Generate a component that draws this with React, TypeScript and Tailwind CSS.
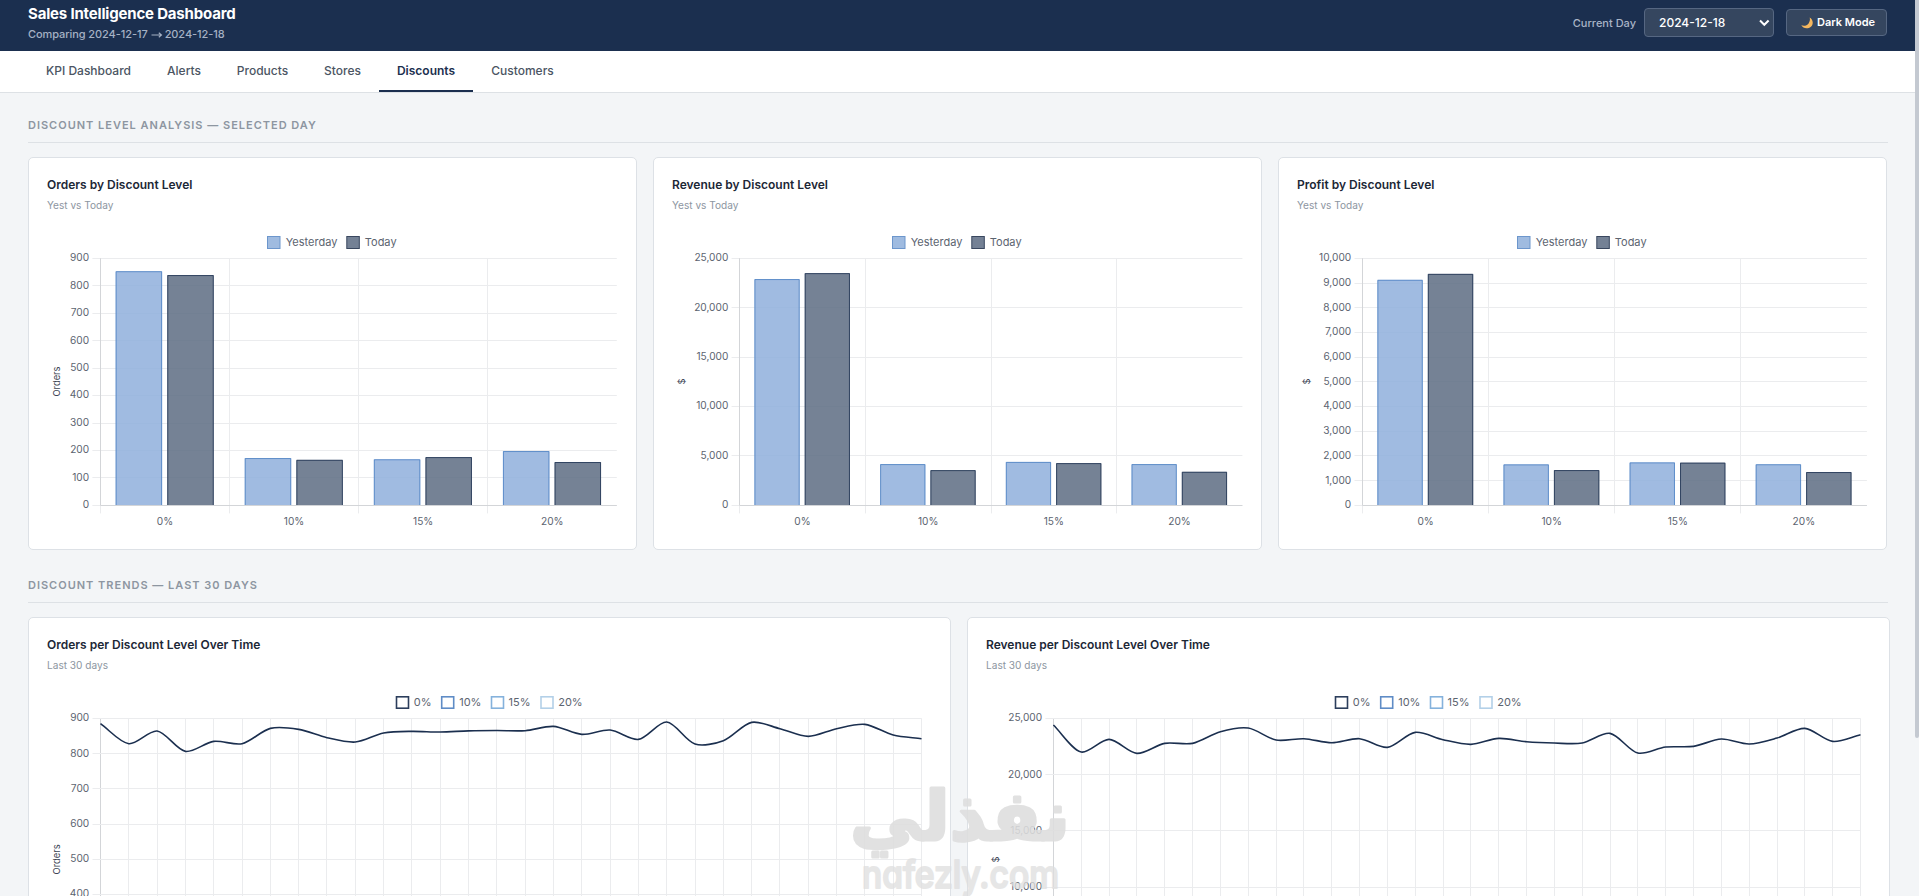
import React from "react";

const GRID = "#ebecee";
const AXIS = "#d3d5d8";
const TICK = "#5c6470";
const NAVY = "#1b2f4f";
const BLUE = "#4a7fc1";

const snap = (v: number) => Math.floor(v) + 0.5;

type Tick = { y: number; label: string };

function YTicks({ ticks, left, right }: { ticks: Tick[]; left: number; right: number }) {
  return (
    <g>
      {ticks.map((t) => (
        <g key={t.label}>
          <line x1={left - 8} x2={right} y1={snap(t.y)} y2={snap(t.y)} stroke={GRID} />
          <text x={left - 11.3} y={t.y + 2.9} textAnchor="end" fontSize={10.15} fill={TICK}>
            {t.label}
          </text>
        </g>
      ))}
    </g>
  );
}

function AxisTitle({ text, y }: { text: string; y: number }) {
  return (
    <text
      transform={`translate(13 ${y}) rotate(-90)`}
      textAnchor="middle"
      fontSize={9.3}
      fill="#3c4553"
    >
      {text}
    </text>
  );
}

type BarProps = {
  left: number;
  step: number;
  max: number;
  unit: number;
  title: string;
  pairs: [number, number][];
};

function BarChart({ left, step, max, unit, title, pairs }: BarProps) {
  const top = 38.3;
  const bottom = 285.4;
  const right = left + step * 4;
  const ticks: Tick[] = [];
  for (let v = max; v >= 0; v -= unit) {
    ticks.push({ y: bottom - ((bottom - top) * v) / max, label: v.toLocaleString("en-US") });
  }
  const barW = step * 0.36;
  const labels = ["0%", "10%", "15%", "20%"];
  const bar = (x: number, v: number, fill: string, stroke: string, key: string) => {
    const y = bottom - ((bottom - top) * v) / max;
    return (
      <g key={key}>
        <rect x={x} y={y} width={barW} height={bottom - y} fill={fill} fillOpacity={0.86} />
        <path
          d={`M${x + 0.5} ${bottom}V${y + 0.5}H${x + barW - 0.5}V${bottom}`}
          fill="none"
          stroke={stroke}
          strokeOpacity={0.75}
        />
      </g>
    );
  };
  return (
    <svg width="571" height="320" viewBox="0 0 571 320" className="block shrink-0">
      <rect x="220.5" y="16.5" width="12.5" height="12" fill="#9fbbe0" stroke="#6c96cc" />
      <text x="238.7" y="26.4" fontSize="11" fill={TICK}>Yesterday</text>
      <rect x="299.8" y="16.5" width="12.5" height="12" fill="#748195" stroke="#39475f" />
      <text x="317.8" y="26.4" fontSize="11" fill={TICK}>Today</text>
      {[1, 2, 3].map((i) => (
        <line key={i} x1={snap(left + step * i)} x2={snap(left + step * i)} y1={top} y2={bottom + 8} stroke={GRID} />
      ))}
      <YTicks ticks={ticks} left={left} right={right} />
      <line x1={snap(left)} x2={snap(left)} y1={bottom} y2={bottom + 8} stroke={GRID} />
      {pairs.map(([a, b], i) => {
        const x = left + step * i + step * 0.118;
        return (
          <g key={i}>
            {bar(x, a, "#90b0dc", BLUE, "a")}
            {bar(x + step * 0.4, b, "#5e6d84", NAVY, "b")}
            <text x={left + step * (i + 0.5)} y={305.2} textAnchor="middle" fontSize={10.15} fill={TICK}>
              {labels[i]}
            </text>
          </g>
        );
      })}
      <line x1={snap(left)} x2={snap(left)} y1={top} y2={bottom} stroke={AXIS} />
      <line x1={left} x2={right} y1={snap(bottom)} y2={snap(bottom)} stroke={AXIS} />
      <AxisTitle text={title} y={161.5} />
    </svg>
  );
}

// Cubic spline with the tension rule used by common canvas chart libraries.
function splinePath(pts: [number, number][], tension: number) {
  const cps = pts.map((p, i) => {
    const a = pts[Math.max(0, i - 1)];
    const c = pts[Math.min(pts.length - 1, i + 1)];
    const d01 = Math.hypot(p[0] - a[0], p[1] - a[1]);
    const d12 = Math.hypot(c[0] - p[0], c[1] - p[1]);
    const sum = d01 + d12;
    const fa = (tension * d01) / sum;
    const fb = (tension * d12) / sum;
    return {
      prev: [p[0] - fa * (c[0] - a[0]), p[1] - fa * (c[1] - a[1])],
      next: [p[0] + fb * (c[0] - a[0]), p[1] + fb * (c[1] - a[1])],
    };
  });
  let d = `M${pts[0][0]} ${pts[0][1]}`;
  for (let i = 1; i < pts.length; i++) {
    d += `C${cps[i - 1].next.join(" ")} ${cps[i].prev.join(" ")} ${pts[i].join(" ")}`;
  }
  return d;
}

const LEVELS = [
  { label: "0%", color: "#2c3e5c", x: 0, tx: 18.4 },
  { label: "10%", color: "#5f8cc6", x: 45.2, tx: 63.8 },
  { label: "15%", color: "#85b2dc", x: 95, tx: 113.2 },
  { label: "20%", color: "#b3d0e8", x: 144.5, tx: 162.8 },
];

type LineProps = { left: number; ticks: Tick[]; title: string; values: number[] };

function LineChart({ left, ticks, title, values }: LineProps) {
  const right = 874.5;
  const top = 38.3;
  const step = (right - left) / (values.length - 1);
  const pts = values.map((v, i): [number, number] => [left + i * step, top + v - 0.6]);
  return (
    <svg width="885" height="360" viewBox="0 0 885 360" className="block shrink-0">
      {LEVELS.map((l) => (
        <g key={l.label}>
          <rect x={349.5 + l.x} y="16.8" width="12" height="11.4" fill="#fff" stroke={l.color} strokeWidth="1.6" />
          <text x={348.4 + l.tx} y="26.4" fontSize="11" fill={TICK}>{l.label}</text>
        </g>
      ))}
      {values.map((_, i) => (
        <line
          key={i}
          x1={snap(left + i * step)}
          x2={snap(left + i * step)}
          y1={top}
          y2="320"
          stroke={i === 0 ? AXIS : GRID}
        />
      ))}
      <YTicks ticks={ticks} left={left} right={right} />
      <path d={splinePath(pts, 0.3)} fill="none" stroke={NAVY} strokeWidth="1.6" />
      <AxisTitle text={title} y={179.4} />
    </svg>
  );
}

function Card({ title, sub, className, children }: { title: string; sub: string; className: string; children: React.ReactNode }) {
  return (
    <div className={`flex shrink-0 flex-col rounded-[5px] border border-[#dde1e6] bg-white px-[18px] ${className}`}>
      <h3 className="mt-[18px] h-[18px] text-[12px] leading-[18px] font-semibold text-[#1c2736]">{title}</h3>
      <p className="mt-1 mb-[7px] h-[15px] text-[10.1px] leading-[15px] text-[#8d96a1]">{sub}</p>
      {children}
    </div>
  );
}

function SectionTitle({ children }: { children: React.ReactNode }) {
  return (
    <h2 className="flex h-[27px] w-[1860px] items-start border-b border-[#dde1e5] text-[11px] leading-[18px] font-semibold tracking-[0.99px] text-[#8d96a1]">
      {children}
    </h2>
  );
}

const TABS = [
  { label: "KPI Dashboard", w: "w-[121px]" },
  { label: "Alerts", w: "w-[70px]" },
  { label: "Products", w: "w-[87px]" },
  { label: "Stores", w: "w-[73px]" },
  { label: "Discounts", w: "w-[94px]" },
  { label: "Customers", w: "w-[99px]" },
];

const orderTicks: Tick[] = [900, 800, 700, 600, 500, 400].map((v, i) => ({ y: 38.4 + i * 35.2, label: String(v) }));
const revenueTicks: Tick[] = ["25,000", "20,000", "15,000", "10,000"].map((label, i) => ({ y: 38.3 + i * 56.3, label }));

const orders = [
  18, 78, 40, 101, 71, 78, 32, 35, 60, 73, 46, 41, 43, 39.5, 38.5, 39, 26, 50, 37, 65, 13, 79, 69, 14, 33, 56, 33, 20, 52,
  63,
].map((v) => v / 3);
const revenue = [
  22, 103, 65, 107, 77, 77, 42, 31, 67, 63, 75, 63, 89, 44, 66, 80, 62, 72, 76, 76, 47, 106, 88, 86, 64, 79, 61, 32, 71,
  51,
].map((v) => v / 3);

export default function App() {
  return (
    <div className="relative flex h-[896px] w-full overflow-hidden bg-[#f3f5f7] font-[Inter,'Liberation_Sans',sans-serif]">
      <div className="flex w-[1915px] shrink-0 flex-col">
        <header className="flex h-[51px] shrink-0 items-start justify-between bg-[#1b2f4f] pr-7 pl-7">
          <div className="flex flex-col">
            <h1 className="mt-1 h-[20px] text-[15px] leading-[20px] font-bold tracking-[-0.18px] text-white">
              Sales Intelligence Dashboard
            </h1>
            <p className="mt-[3px] flex h-[14px] items-center text-[11px] leading-[14px] font-medium tracking-[-0.08px] text-[#a5b1c4]">
              <span>Comparing 2024-12-17</span>
              <svg width="17" height="8" viewBox="0 0 17 8" fill="none" stroke="#a5b1c4" strokeWidth="1.1" className="mt-px">
                <path d="M3.500 4H13.500M10.800 1.800 13.500 4 10.800 6.200" />
              </svg>
              <span>2024-12-18</span>
            </p>
          </div>
          <div className="flex items-center pt-2">
            <span className="mr-2 text-[11px] leading-[28px] font-medium text-[#a9b4c6]">Current Day</span>
            <div className="flex h-[29px] w-[130px] items-center justify-between rounded-[4px] border border-[#566782] bg-[#35465f] pr-[3px] pl-[14px] text-[12px] font-medium text-white">
              2024-12-18
              <svg width="11" height="8" viewBox="0 0 11 8" fill="none" stroke="#fff" strokeWidth="2">
                <path d="M1 1.5 5.3 5.8 9.6 1.5" />
              </svg>
            </div>
            <div className="ml-3 flex h-[27px] w-[101px] items-center rounded-[4px] border border-[#566782] bg-[#35465f] pl-[14px] text-[11px] font-semibold text-white">
              <svg width="12" height="12" viewBox="0 0 12 12" className="mt-px mr-[4px] shrink-0">
                <path d="M8.700.500C12.300 2.800 12.700 7.200 9.900 9.700 7 12.200 2.200 11.900.300 8.300 3 9.300 6 8.600 7.600 6.400 8.900 4.600 9.200 2.500 8.700.500Z" fill="#f5b75e" />
              </svg>
              Dark Mode
            </div>
          </div>
        </header>
        <nav className="flex h-[42px] shrink-0 border-b border-[#dde1e5] bg-white pl-7">
          {TABS.map((t) => (
            <div
              key={t.label}
              className={`flex h-[41px] justify-center border-b-2 text-[12px] leading-[40px] ${t.w} ${
                t.label === "Discounts"
                  ? "border-[#1b2f4f] font-semibold text-[#1b2f4f]"
                  : "border-transparent font-medium text-[#4b5563]"
              }`}
            >
              {t.label}
            </div>
          ))}
        </nav>
        <main className="flex flex-col pt-[23px] pl-7">
          <SectionTitle>DISCOUNT LEVEL ANALYSIS — SELECTED DAY</SectionTitle>
          <div className="mt-[14px] flex gap-4">
            <Card title="Orders by Discount Level" sub="Yest vs Today" className="h-[393px] w-[609px]">
              <BarChart left={53.4} step={129.1} max={900} unit={100} title="Orders"
                pairs={[[853, 839], [172.5, 166], [168, 176], [198, 158]]} />
            </Card>
            <Card title="Revenue by Discount Level" sub="Yest vs Today" className="h-[393px] w-[609px]">
              <BarChart left={67.6} step={125.7} max={25000} unit={5000} title="$"
                pairs={[[22900, 23500], [4180, 3570], [4400, 4280], [4180, 3400]]} />
            </Card>
            <Card title="Profit by Discount Level" sub="Yest vs Today" className="h-[393px] w-[609px]">
              <BarChart left={65.5} step={126.1} max={10000} unit={1000} title="$"
                pairs={[[9130, 9370], [1660, 1430], [1740, 1730], [1665, 1350]]} />
            </Card>
          </div>
          <div className="mt-[26px] flex flex-col">
            <SectionTitle>DISCOUNT TRENDS — LAST 30 DAYS</SectionTitle>
          </div>
          <div className="mt-[14px] flex gap-4">
            <Card title="Orders per Discount Level Over Time" sub="Last 30 days" className="h-[460px] w-[923px]">
              <LineChart left={53.5} ticks={orderTicks} title="Orders" values={orders} />
            </Card>
            <Card title="Revenue per Discount Level Over Time" sub="Last 30 days" className="h-[460px] w-[923px]">
              <LineChart left={67.4} ticks={revenueTicks} title="$" values={revenue} />
            </Card>
          </div>
        </main>
      </div>
      <div className="w-1 shrink-0">
        <div className="h-[738px] rounded-b-[2px] bg-[#c4c9d1]" />
      </div>
      <svg width="240" height="116" viewBox="840 780 240 116" className="pointer-events-none absolute top-[780px] left-[840px]">
        <text
          x="850" y="840" textLength="220" lengthAdjust="spacingAndGlyphs" direction="ltr"
          fontFamily="'DejaVu Sans', sans-serif" fontWeight="700" fontSize="69"
          fill="#dedede" stroke="#dedede" strokeWidth="3" strokeLinejoin="round" opacity="0.88"
        >
          نفذلي
        </text>
        <text
          x="862" y="888" textLength="197" lengthAdjust="spacingAndGlyphs"
          fontWeight="500" fontSize="38" className="[font-feature-settings:'cv11']"
          fill="#dedede" stroke="#dedede" strokeWidth="2" strokeLinejoin="round" opacity="0.75"
        >
          nafezly.com
        </text>
      </svg>
    </div>
  );
}
